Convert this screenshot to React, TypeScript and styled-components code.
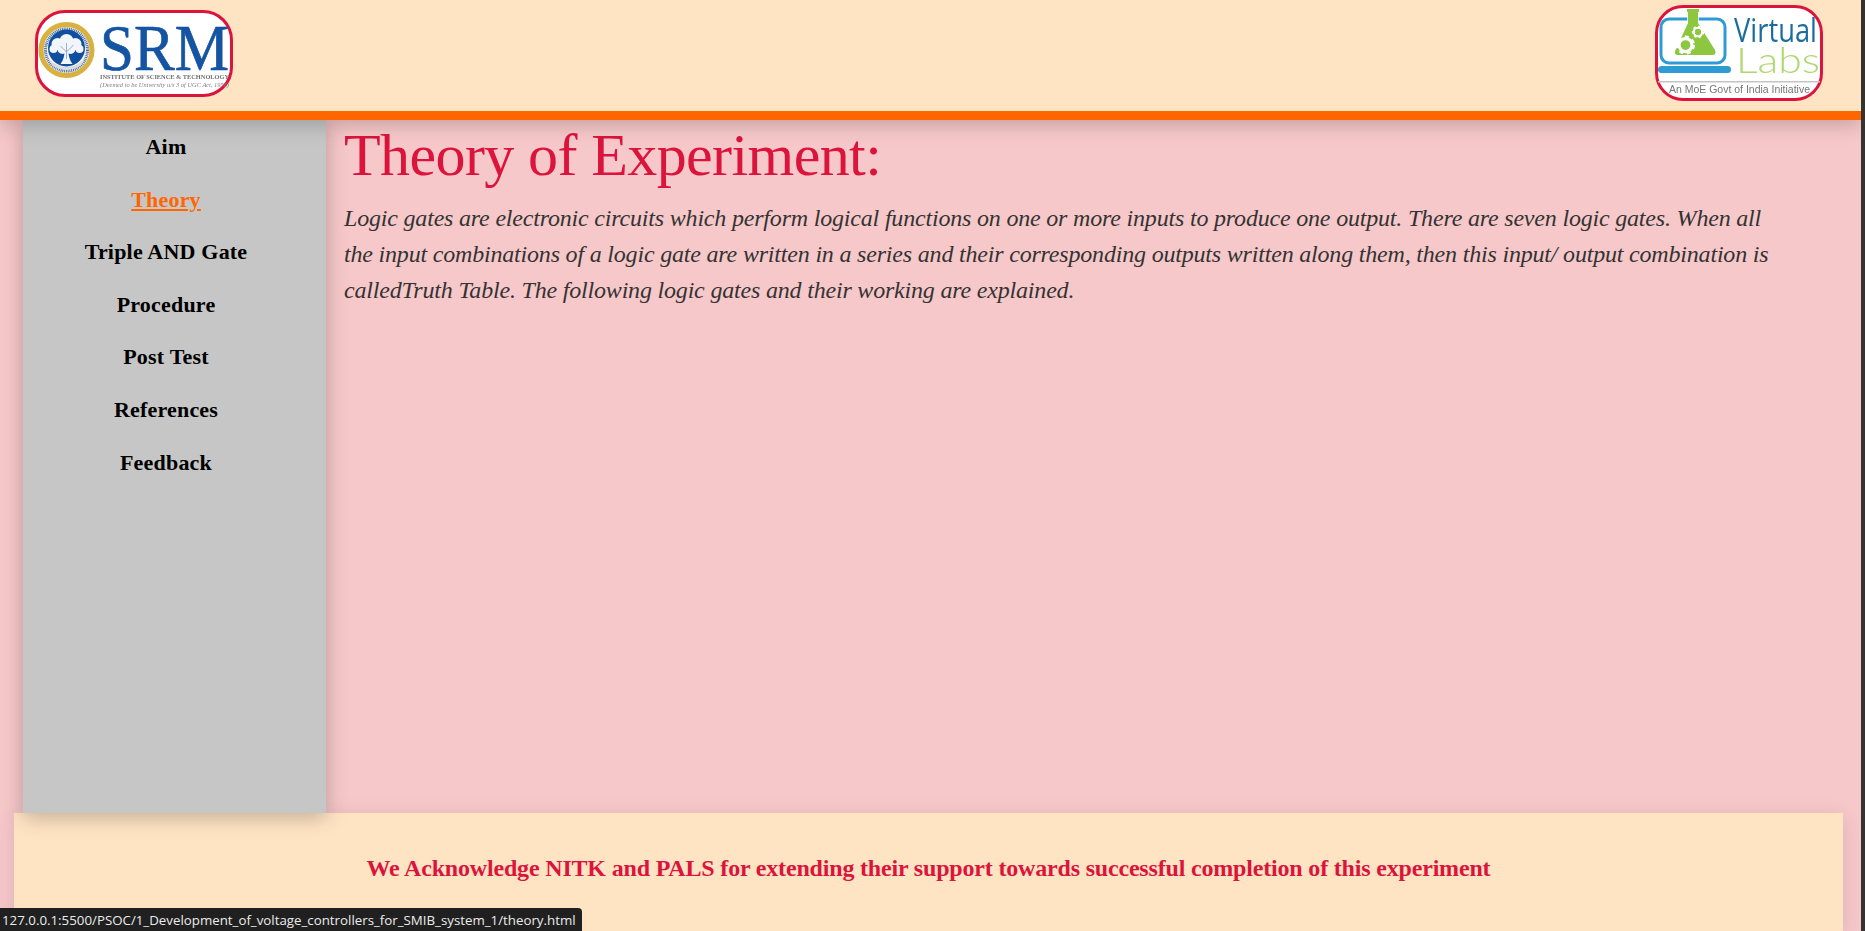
import React from "react";
import styled, { createGlobalStyle } from "styled-components";

const GlobalStyle = createGlobalStyle`
  html, body {
    margin: 0;
    padding: 0;
    height: 100%;
    overflow: hidden;
    background: #333333;
  }
`;

const Page = styled.div`
  position: relative;
  width: 1861px;
  height: 931px;
  display: flex;
  flex-direction: column;
  overflow: hidden;
  background: #f7c8c9;
  font-family: "Liberation Serif", "Times New Roman", serif;
`;

const Header = styled.header`
  position: relative;
  z-index: 3;
  flex: none;
  height: 111px;
  padding: 0 38px 0 35px;
  display: flex;
  justify-content: space-between;
  align-items: flex-start;
  background: #ffe4c4;
  border-bottom: 9px solid #ff6600;
  box-shadow: 0 4px 20px rgba(0, 0, 0, 0.22);
`;

const LogoFrame = styled.div<{ $top: number; $width: number; $height: number; $radius: number }>`
  margin-top: ${p => p.$top}px;
  width: ${p => p.$width}px;
  height: ${p => p.$height}px;
  box-sizing: border-box;
  border: 3px solid #dc143c;
  border-radius: ${p => p.$radius}px;
  background: #ffffff;

  svg {
    display: block;
    overflow: visible;
    filter: blur(0.35px);
  }
`;

const Middle = styled.div`
  flex: 1;
  min-height: 0;
  display: flex;
  align-items: stretch;
`;

const Sidebar = styled.nav`
  position: relative;
  z-index: 2;
  flex: none;
  width: 303px;
  margin-left: 23px;
  padding: 1px 17px 0 0;
  box-sizing: border-box;
  background: #c6c6c6;
  box-shadow: 0 4px 20px rgba(0, 0, 0, 0.25);
`;

const NavItem = styled.a<{ $active?: boolean }>`
  display: block;
  height: 52.6px;
  line-height: 52px;
  text-align: center;
  font-size: 22px;
  font-weight: bold;
  letter-spacing: 0.2px;
  color: ${p => (p.$active ? "#ff6600" : "#000000")};
  text-decoration: ${p => (p.$active ? "underline" : "none")};
`;

const Content = styled.main`
  flex: 1;
  min-width: 0;
  padding: 0 70px 0 18px;
`;

const Title = styled.h1`
  margin: 1px 0 0;
  font-size: 60px;
  line-height: 69px;
  font-weight: normal;
  letter-spacing: -0.6px;
  color: #dc143c;
`;

const Theory = styled.p`
  margin: 10px 0 0;
  font-size: 24px;
  line-height: 36px;
  font-style: italic;
  letter-spacing: -0.19px;
  color: #333333;
`;

const Footer = styled.footer`
  position: relative;
  z-index: 1;
  flex: none;
  height: 118px;
  margin: 0 18px 0 14px;
  padding-top: 38px;
  box-sizing: border-box;
  background: #ffe4c4;
  box-shadow: 0 4px 20px rgba(0, 0, 0, 0.12);
  text-align: center;
  font-size: 24px;
  font-weight: bold;
  line-height: 34px;
  letter-spacing: -0.18px;
  color: #dc143c;
`;

const StatusBar = styled.div`
  position: absolute;
  z-index: 5;
  left: 0;
  bottom: 0;
  height: 23px;
  padding: 0 6px 0 2px;
  box-sizing: border-box;
  border-top-right-radius: 4px;
  background: #202020;
  color: #ececec;
  font-family: "Open Sans", "Noto Sans", sans-serif;
  font-size: 13.3px;
  line-height: 24px;
  white-space: nowrap;
`;

const SrmLogo = () => (
  <svg width="192" height="81" viewBox="0 0 192 81">
    <circle cx="28.5" cy="37" r="25.5" fill="#f4f3ee" stroke="#d9b13f" strokeWidth="5" />
    <circle cx="28.5" cy="37" r="21" fill="none" stroke="#4a6fae" strokeWidth="3" strokeDasharray="1 0.8" />
    <circle cx="28.5" cy="35" r="18.5" fill="#0f4fa0" />
    <path d="M10.5 46 Q28.5 62 46.5 46 Q43.5 56 28.5 57 Q13.5 56 10.5 46 Z" fill="#dcdcdc" />
    <g fill="#f2f5fa">
      <circle cx="28.5" cy="28" r="7" />
      <circle cx="19.5" cy="31" r="6" />
      <circle cx="37.5" cy="31" r="6" />
      <circle cx="15.5" cy="36" r="4" />
      <circle cx="41.5" cy="36" r="4" />
      <circle cx="24.5" cy="36" r="5" />
      <circle cx="32.5" cy="36" r="5" />
      <path d="M26.5 38 h4 q0 8 4 13 h-12 q4 -5 4 -13 Z" />
    </g>
    <path d="M28.5 30 v16 M22.5 33 l6 6 M35.5 32 l-7 7" stroke="#7d9dc9" strokeWidth="0.8" fill="none" />
    <text
      x="62"
      y="57"
      fontFamily="Liberation Serif, serif"
      fontSize="66"
      fill="#1553a3"
      stroke="#1553a3"
      strokeWidth="0.7"
      textLength="129"
      lengthAdjust="spacingAndGlyphs"
    >
      SRM
    </text>
    <text
      x="62"
      y="65.5"
      fontFamily="Liberation Serif, serif"
      fontSize="6.4"
      fontWeight="bold"
      fill="#6f6f6f"
      textLength="129"
      lengthAdjust="spacingAndGlyphs"
    >
      INSTITUTE OF SCIENCE &amp; TECHNOLOGY
    </text>
    <text
      x="62"
      y="73.5"
      fontFamily="Liberation Serif, serif"
      fontSize="5.8"
      fontStyle="italic"
      fill="#808080"
      textLength="129"
      lengthAdjust="spacingAndGlyphs"
    >
      (Deemed to be University u/s 3 of UGC Act, 1956)
    </text>
  </svg>
);

const Gear = ({ cx, cy, r }: { cx: number; cy: number; r: number }) => (
  <g>
    <circle cx={cx} cy={cy} r={r} fill="none" stroke="#ffffff" strokeWidth={r * 0.5} />
    <circle
      cx={cx}
      cy={cy}
      r={r * 1.25}
      fill="none"
      stroke="#ffffff"
      strokeWidth={r * 0.45}
      strokeDasharray={`${r * 0.6} ${r * 0.55}`}
    />
  </g>
);

const VirtualLabsLogo = () => (
  <svg width="162" height="90" viewBox="0 0 162 90">
    <rect x="3" y="11" width="64" height="44" rx="8" fill="none" stroke="#2f9bd5" strokeWidth="3" />
    <rect x="0" y="58" width="73" height="7" rx="3.5" fill="#2f9bd5" />
    <path
      d="M29 1 H41 V4 H40 V15 L57 42 Q59 47 54 47 H20 Q15.5 47 17.5 42 L30 15 V4 H29 Z"
      fill="#8dc63f"
      stroke="#ffffff"
      strokeWidth="1.5"
      paintOrder="stroke"
    />
    <Gear cx={27.5} cy={37} r={6.5} />
    <Gear cx={40} cy={24} r={4.2} />
    <text
      x="76"
      y="34"
      fontFamily="Open Sans, sans-serif"
      fontSize="33"
      fontWeight="500"
      fill="#1c6d9f"
      textLength="83"
      lengthAdjust="spacingAndGlyphs"
    >
      Virtual
    </text>
    <text
      x="78"
      y="65"
      fontFamily="Lato, sans-serif"
      fontSize="36"
      fontWeight="300"
      fill="#afd86f"
      textLength="84"
      lengthAdjust="spacingAndGlyphs"
    >
      Labs
    </text>
    <rect x="0" y="73" width="162" height="1.5" fill="#c4c4c4" />
    <text
      x="11"
      y="85"
      fontFamily="Liberation Sans, sans-serif"
      fontSize="11"
      fill="#777777"
      textLength="141"
      lengthAdjust="spacingAndGlyphs"
    >
      An MoE Govt of India Initiative
    </text>
  </svg>
);

const links = ["Aim", "Theory", "Triple AND Gate", "Procedure", "Post Test", "References", "Feedback"];

export default function App() {
  return (
    <Page>
      <GlobalStyle />
      <Header>
        <LogoFrame $top={10} $width={198} $height={87} $radius={30}>
          <SrmLogo />
        </LogoFrame>
        <LogoFrame $top={5} $width={168} $height={96} $radius={28}>
          <VirtualLabsLogo />
        </LogoFrame>
      </Header>
      <Middle>
        <Sidebar>
          {links.map(link => (
            <NavItem key={link} $active={link === "Theory"}>
              {link}
            </NavItem>
          ))}
        </Sidebar>
        <Content>
          <Title>Theory of Experiment:</Title>
          <Theory>
            Logic gates are electronic circuits which perform logical functions on one or more inputs to produce one
            output. There are seven logic gates. When all the input combinations of a logic gate are written in a series
            and their corresponding outputs written along them, then this input/ output combination is calledTruth Table.
            The following logic gates and their working are explained.
          </Theory>
        </Content>
      </Middle>
      <Footer>We Acknowledge NITK and PALS for extending their support towards successful completion of this experiment</Footer>
      <StatusBar>127.0.0.1:5500/PSOC/1_Development_of_voltage_controllers_for_SMIB_system_1/theory.html</StatusBar>
    </Page>
  );
}
